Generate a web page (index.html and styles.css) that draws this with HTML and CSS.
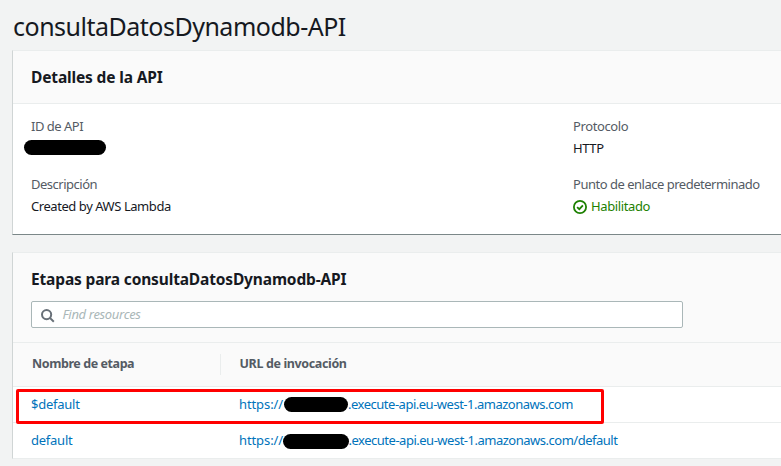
FILE: index.html
```html
<!DOCTYPE html>
<html lang="es">
<head>
<meta charset="utf-8">
<title>consultaDatosDynamodb-API</title>
<link rel="stylesheet" href="styles.css">
</head>
<body>
<h1 class="page-title">consultaDatosDynamodb-API</h1>
<section class="card details">
  <header class="card-header"><h2>Detalles de la API</h2></header>
  <div class="details-grid">
    <div class="field">
      <div class="label">ID de API</div>
      <div class="value"><span class="redacted redacted-id"></span></div>
    </div>
    <div class="field">
      <div class="label wide">Protocolo</div>
      <div class="value wide">HTTP</div>
    </div>
    <div class="field">
      <div class="label">Descripción</div>
      <div class="value">Created by AWS Lambda</div>
    </div>
    <div class="field">
      <div class="label">Punto de enlace predeterminado</div>
      <div class="value wide status">
        <svg class="check" viewBox="0 0 14 14"><circle cx="7" cy="7" r="6.1"/><path d="M4.1 7.1l2.2 2.1 3.6-3.9"/></svg>
        <span>Habilitado</span>
      </div>
    </div>
  </div>
</section>
<section class="card stages">
  <div class="stages-head">
    <h2>Etapas para consultaDatosDynamodb-API</h2>
    <div class="search">
      <svg class="lens" viewBox="0 0 14 14"><circle cx="5.6" cy="5.6" r="4.6"/><path d="M8.9 8.9l3.9 3.9"/></svg>
      <span class="placeholder">Find resources</span>
    </div>
  </div>
  <div class="row row-head">
    <div class="cell name"><span>Nombre de etapa</span></div>
    <div class="cell url"><span>URL de invocación</span></div>
  </div>
  <div class="row">
    <div class="cell name"><a>$default</a></div>
    <div class="cell url"><a class="scheme">https://</a><span class="redacted gap-one"></span><a class="host">.execute-api.eu-west-1.amazonaws.com</a></div>
    <div class="highlight"></div>
  </div>
  <div class="row">
    <div class="cell name"><a>default</a></div>
    <div class="cell url"><a class="scheme">https://</a><span class="redacted gap-two"></span><a class="host">.execute-api.eu-west-1.amazonaws.com/default</a></div>
  </div>
</section>
</body>
</html>
```
FILE: styles.css
```css
* { box-sizing: border-box; }
body {
  margin: 0;
  height: 466px;
  overflow: hidden;
  background: #f2f3f3;
  color: #16191f;
  font: 13px/20px "Noto Sans", "Open Sans", sans-serif;
  white-space: nowrap;
}
h1, h2 { margin: 0; }
.page-title {
  height: 50px;
  padding: 8px 0 0 13px;
  font-size: 25px;
  line-height: 36px;
  font-weight: 400;
  letter-spacing: -0.5px;
}
.card {
  margin-left: 12px;
  border-left: 1px solid #d0d5d5;
  border-top: 1px solid #eaeded;
  background: #fff;
}
.card h2 { font-size: 15.5px; line-height: 22px; font-weight: 700; letter-spacing: -0.15px; }
.details { height: 185px; border-bottom: 1px solid #7b8788; }
.card-header {
  height: 53px;
  padding: 15px 0 0 18px;
  background: #fafafa;
  border-bottom: 1px solid #eaeded;
}
.details-grid {
  display: grid;
  grid-template-columns: 542px 1fr;
  grid-template-rows: 58px 58px;
  padding: 12px 0 0 18px;
}
.label { height: 22px; color: #545b64; letter-spacing: -0.49px; }
.value { height: 20px; letter-spacing: -0.44px; }
.wide { letter-spacing: -0.38px; }
.status { display: flex; align-items: center; gap: 4px; color: #1d8102; }
.check { width: 14px; height: 14px; margin-top: 1px; fill: none; stroke: #1d8102; stroke-width: 1.8; }
.redacted { display: inline-block; height: 15px; background: #000; border-radius: 8px; }
.redacted-id { width: 82px; margin-left: -7px; margin-top: 2px; vertical-align: top; }
.stages { height: 207px; margin-top: 17px; border-bottom: 1px solid #eaeded; }
.stages-head {
  height: 90px;
  padding: 15px 0 0 18px;
  background: #fafafa;
  border-bottom: 1px solid #eaeded;
}
.search {
  display: flex;
  align-items: center;
  width: 652px;
  height: 27px;
  margin-top: 11px;
  padding-left: 9px;
  gap: 7.5px;
  background: #fff;
  border: 1px solid #aab7b8;
  border-radius: 2px;
}
.lens { width: 14px; height: 14px; margin-top: 2px; fill: none; stroke: #687078; stroke-width: 2; }
.placeholder { padding-bottom: 1px; color: #aab7b8; font-style: italic; letter-spacing: -0.33px; }
.row {
  position: relative;
  display: flex;
  align-items: center;
  height: 36px;
  border-bottom: 1px solid #eaeded;
}
.row:last-child { border-bottom: 0; }
.row-head {
  height: 44px;
  background: #fafafa;
  color: #545b64;
  font-size: 12.5px;
  font-weight: 700;
  letter-spacing: -0.42px;
}
.row-head span { padding-bottom: 1px; }
.cell { display: flex; align-items: center; }
.name { width: 208px; padding-left: 18px; }
.url { padding-left: 18px; }
.row-head .cell { height: 21px; }
.row-head .name { padding-left: 19px; border-right: 1px solid #eaeded; }
.row-head .url { padding-left: 18.5px; letter-spacing: -0.37px; }
a { padding-bottom: 2px; color: #0073bb; letter-spacing: -0.25px; }
.scheme { width: 45px; letter-spacing: -0.1px; }
.host { letter-spacing: -0.49px; }
.gap-one { width: 64px; }
.gap-two { width: 66px; margin-left: -1px; margin-right: -0.5px; }
.highlight {
  position: absolute;
  left: 3px;
  top: 2px;
  width: 588px;
  height: 35px;
  border: 3px solid #f00;
  border-radius: 2px;
  z-index: 1;
}
```
